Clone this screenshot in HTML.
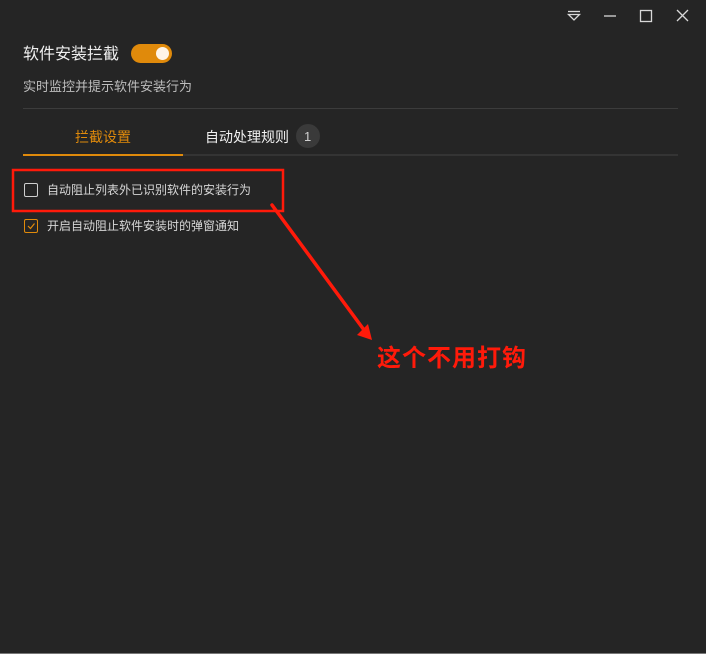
<!DOCTYPE html>
<html><head><meta charset="utf-8"><style>
*{margin:0;padding:0;box-sizing:border-box}
body{width:706px;height:654px;background:#252525;position:relative;overflow:hidden;font-family:"Liberation Sans","Noto Sans CJK SC",sans-serif;color:#e8e8e8}
.a{position:absolute;white-space:nowrap;line-height:1}
</style></head><body>
<svg class="a" style="left:0;top:0" width="706" height="654">
 <g stroke="#d8d8d8" stroke-width="1.3" fill="none">
  <line x1="568" y1="11.5" x2="580" y2="11.5"/>
  <path d="M568.5 14.5 L579.5 14.5 L574 20 Z"/>
  <line x1="604" y1="16" x2="616" y2="16"/>
  <rect x="640.5" y="10.5" width="11" height="11"/>
  <path d="M677 10 L688 21 M688 10 L677 21"/>
 </g>
 <rect x="131" y="44" width="41" height="19" rx="9.5" fill="#e08a0b"/>
 <circle cx="162.5" cy="53.5" r="6.5" fill="#fff4e6"/>
 <line x1="23" y1="108.5" x2="678" y2="108.5" stroke="#3c3c3c"/>
 <line x1="23" y1="155" x2="678" y2="155" stroke="#444"/>
 <line x1="23" y1="155" x2="183" y2="155" stroke="#e08a0b" stroke-width="2"/>
 <circle cx="308" cy="136" r="12" fill="#3a3a3a"/>
 <rect x="24.5" y="183.5" width="13" height="13" rx="1.5" fill="none" stroke="#cfcfcf" stroke-width="1"/>
 <rect x="24.5" y="219.5" width="13" height="13" rx="1.5" fill="none" stroke="#e08a0b" stroke-width="1"/>
 <path d="M28 226 L30.5 228.5 L34.5 223.5" stroke="#e08a0b" stroke-width="1.2" fill="none"/>
 <rect x="13" y="170" width="270" height="41" fill="none" stroke="#ff1a0a" stroke-width="2.5"/>
 <line x1="272" y1="205" x2="367" y2="334" stroke="#ff1a0a" stroke-width="3.5" stroke-linecap="round"/>
 <path d="M357 335 L372 340 L368 324 Z" fill="#ff1a0a"/>
 <line x1="0" y1="653.5" x2="706" y2="653.5" stroke="#777"/>
</svg>
<div class="a" style="left:23px;top:47px;font-size:16px;color:#f0f0f0">软件安装拦截</div>
<div class="a" style="left:23px;top:80px;font-size:13px;color:#bdbdbd">实时监控并提示软件安装行为</div>
<div class="a" style="left:75px;top:130px;font-size:14px;color:#e08a0b">拦截设置</div>
<div class="a" style="left:205px;top:130px;font-size:14px;color:#f0f0f0">自动处理规则</div>
<div class="a" style="left:304px;top:130px;font-size:13px;color:#d0d0d0">1</div>
<div class="a" style="left:47px;top:184px;font-size:12px;color:#d6d6d6">自动阻止列表外已识别软件的安装行为</div>
<div class="a" style="left:47px;top:220px;font-size:12px;color:#d6d6d6">开启自动阻止软件安装时的弹窗通知</div>
<div class="a" style="left:377px;top:347px;font-size:24px;font-weight:bold;color:#ff1a0a;letter-spacing:1px">这个不用打钩</div>
</body></html>
